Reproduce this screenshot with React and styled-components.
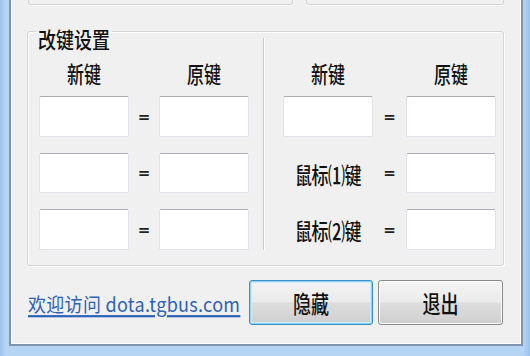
import React from 'react';
import styled, { createGlobalStyle } from 'styled-components';

const GlobalStyle = createGlobalStyle`
  html, body {
    margin: 0;
    padding: 0;
    background: #a9cbef;
  }
  body {
    font-family: "Noto Sans CJK SC", "Liberation Sans", sans-serif;
  }
`

const Frame = styled.div`
  width: 530px;
  height: 356px;
  box-sizing: border-box;
  padding: 0 7px 10px 9px;
  background: linear-gradient(90deg, #9cc2ec 0px, #b6d4f3 5px, #b6d4f3 523px, #9cc2ec 530px);
  display: flex;
`

const Panel = styled.div`
  flex: 1;
  display: flex;
  flex-direction: column;
  background: #f0f0f0;
  border: 2px solid #7e94ae;
  border-top: none;
  box-shadow: inset 1px 0 #ffffff, inset -1px -1px #ffffff;
`

const TopGroups = styled.div`
  display: flex;
  gap: 13px;
  padding-left: 17px;
`

const CutGroup = styled.div`
  width: ${props => props.w}px;
  height: 5px;
  box-sizing: border-box;
  border: 1px solid #d5d5d5;
  border-top: none;
  border-radius: 0 0 3px 3px;
  box-shadow: 0 1px #ffffff;
`

const GroupBox = styled.fieldset`
  margin: 10px 17px 0 16px;
  padding: 0 6px 15px 11px;
  border: 1px solid #d5d5d5;
  border-radius: 3px;
  box-shadow: inset 1px 1px #ffffff, 1px 1px #ffffff;
  display: flex;
`

const Legend = styled.legend`
  padding: 12px 2px 0;
  margin-left: -3px;
  font-size: 18px;
  line-height: 20px;
  font-weight: 500;
  color: #111;
  transform: scaleY(1.2);
`

const Half = styled.div`
  display: grid;
  grid-template-columns: 90px ${props => props.eq}px 90px;
  grid-template-rows: 15px 41px 40px 41px;
  row-gap: 16px;
  align-items: center;
  padding-top: 27px;
  margin-top: -9px;
  ${props => props.divider ? `
    border-left: 1px solid #c9c9c9;
    box-shadow: inset 1px 0 #ffffff;
    padding-left: 19px;
  ` : `
    margin-right: 14px;
  `}
`

const Heading = styled.div`
  align-self: start;
  margin-top: -1px;
  text-align: center;
  font-size: 17px;
  font-weight: 500;
  color: #111;
  line-height: 20px;
  transform: scaleY(1.35);
`

const Label = styled.div`
  text-align: center;
  font-size: 17px;
  font-weight: 500;
  color: #111;
  white-space: nowrap;
  letter-spacing: -0.5px;
  transform: scaleY(1.35);
`

const Eq = styled.div`
  text-align: center;
  font-family: "DejaVu Sans", sans-serif;
  font-size: 15px;
  font-weight: bold;
  color: #222;
`

const KeyBox = styled.input`
  height: 100%;
  width: 100%;
  box-sizing: border-box;
  margin: 0;
  background: #ffffff;
  border: 1px solid #e2e3ea;
  border-top-color: #abadb3;
  border-radius: 2px;
  outline: none;
`

const Footer = styled.div`
  display: flex;
  align-items: center;
  padding: 14px 18px 0 17px;
`

const SiteLink = styled.a`
  font-size: 18px;
  color: #2b62b7;
  text-decoration: underline;
  text-decoration-thickness: 1.5px;
  text-underline-offset: 3px;
  margin-right: auto;
  white-space: nowrap;
  letter-spacing: 0.3px;
  transform: scaleY(1.1);
`

const Button = styled.button`
  width: ${props => props.w}px;
  height: 45px;
  margin-left: 5px;
  padding: 0;
  font-family: "Noto Sans CJK SC", sans-serif;
  font-size: 18px;
  font-weight: 500;
  color: #111;
  border-radius: 3px;
  background: linear-gradient(#f4f4f4 0%, #ebebeb 48%, #dddddd 52%, #cfcfcf 100%);
  border: 1px solid ${props => props.focused ? '#3c8fc4' : '#8a8a8a'};
  box-shadow: ${props => props.focused
    ? 'inset 0 0 0 1px #8fd4f2, inset 0 0 0 2px #c8ecfb'
    : 'inset 0 0 0 1px #fcfcfc'};
  cursor: pointer;
`

const ButtonText = styled.span`
  display: inline-block;
  transform: scaleY(1.3);
`

const leftRows = [0, 1, 2];
const rightLabels = [null, '鼠标⑴键', '鼠标⑵键'];

const App = () => {
  return (
    <Frame>
      <GlobalStyle />
      <Panel>
        <TopGroups>
          <CutGroup w={265} />
          <CutGroup w={198} />
        </TopGroups>
        <GroupBox>
          <Legend>改键设置</Legend>
          <Half eq={30}>
            <Heading>新键</Heading>
            <div />
            <Heading>原键</Heading>
            {leftRows.map(i => (
              <React.Fragment key={i}>
                <KeyBox />
                <Eq>=</Eq>
                <KeyBox />
              </React.Fragment>
            ))}
          </Half>
          <Half eq={33} divider>
            <Heading>新键</Heading>
            <div />
            <Heading>原键</Heading>
            {rightLabels.map((label, i) => (
              <React.Fragment key={i}>
                {label ? <Label>{label}</Label> : <KeyBox />}
                <Eq>=</Eq>
                <KeyBox />
              </React.Fragment>
            ))}
          </Half>
        </GroupBox>
        <Footer>
          <SiteLink href="#">欢迎访问 dota.tgbus.com</SiteLink>
          <Button w={124} focused><ButtonText>隐藏</ButtonText></Button>
          <Button w={125}><ButtonText>退出</ButtonText></Button>
        </Footer>
      </Panel>
    </Frame>
  )
}

export default App;
